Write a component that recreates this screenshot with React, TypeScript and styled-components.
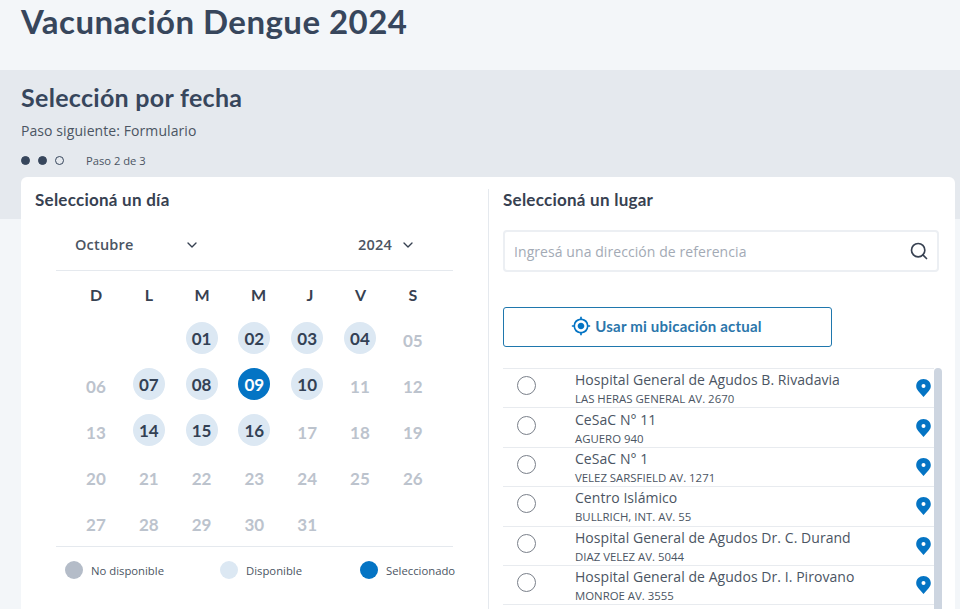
import React from "react";
import styled, { createGlobalStyle } from "styled-components";
import { ChevronDown, Search } from "lucide-react";
import { MdMyLocation } from "react-icons/md";

const Global = createGlobalStyle`
  html, body { margin: 0; padding: 0; background: #f3f6f9; }
  * { box-sizing: border-box; }
  body { font-family: "Open Sans", "Liberation Sans", sans-serif; }
`;

const heading = `"Lato", "Open Sans", sans-serif`;

const Page = styled.div`
  width: 960px;
  height: 609px;
  overflow: hidden;
  background: #f3f6f9;
`;
const TopBar = styled.header`
  height: 70px;
  padding: 0 21px;
`;
const Title = styled.h1`
  margin: 0;
  font-family: ${heading};
  font-size: 33px;
  line-height: 43px;
  font-weight: 700;
  letter-spacing: 0.46px;
  color: #37465c;
`;
const Band = styled.section`
  height: 149px;
  padding: 12px 21px 0;
  background: #e5e9ee;
`;
const Subtitle = styled.h2`
  margin: 0;
  font-family: ${heading};
  font-size: 25px;
  line-height: 31px;
  font-weight: 700;
  letter-spacing: 0.3px;
  color: #37465c;
`;
const NextStep = styled.p`
  margin: 8px 0 0;
  font-size: 14px;
  line-height: 20px;
  letter-spacing: 0.08px;
  color: #4b5563;
`;
const Stepper = styled.div`
  display: flex;
  align-items: center;
  margin-top: 9px;
  height: 20px;
`;
const Dot = styled.span<{ $on?: boolean }>`
  width: 9px;
  height: 9px;
  margin-right: 8px;
  border-radius: 50%;
  background: ${(p) => (p.$on ? "#37465c" : "transparent")};
  border: 1px solid #37465c;
`;
const StepLabel = styled.span`
  margin-left: 14px;
  font-size: 11.2px;
  color: #4b5563;
`;
const Card = styled.main`
  display: grid;
  grid-template-columns: 467px 467px;
  width: 934px;
  height: 500px;
  margin: -42px 0 0 21px;
  background: #fff;
  border-radius: 6px 6px 0 0;
`;
const LeftCol = styled.div`
  padding: 12px 0 0 14px;
`;
const RightCol = styled.div`
  margin-top: 12px;
  padding: 0 0 0 14px;
  border-left: 1px solid #e5e9ee;
`;
const ColTitle = styled.h3`
  margin: 0;
  font-family: ${heading};
  font-size: 17px;
  line-height: 21px;
  font-weight: 700;
  letter-spacing: 0.25px;
  color: #374151;
`;
const Calendar = styled.div`
  width: 397px;
  margin: 13px 0 0 21px;
`;
const Selects = styled.div`
  display: flex;
  align-items: center;
  justify-content: space-between;
  height: 48px;
  padding: 0 37px 4px 19px;
  border-bottom: 1px solid #e5e9ee;
`;
const Select = styled.div<{ $w: number }>`
  display: flex;
  align-items: center;
  justify-content: space-between;
  width: ${(p) => p.$w}px;
  font-size: 14.5px;
  font-weight: 600;
  letter-spacing: 0.2px;
  color: #4b5563;
  svg { color: #374151; }
`;
const Week = styled.div`
  display: grid;
  grid-template-columns: 52.8px 53.2px 52.8px 60.2px 42.8px 58.2px 46.8px;
  padding: 0 13.6px;
`;
const WeekDay = styled.div`
  height: 44px;
  padding-top: 2px;
  display: flex;
  align-items: center;
  justify-content: center;
  font-family: ${heading};
  font-size: 16px;
  font-weight: 700;
  color: #374151;
`;
const Days = styled.div`
  display: grid;
  grid-template-columns: repeat(7, 52.8px);
  grid-auto-rows: 46px;
  padding: 0 13.6px;
`;
const Day = styled.div<{ $kind: "off" | "on" | "sel" | "none" }>`
  justify-self: center;
  align-self: center;
  width: 32px;
  height: 32px;
  display: flex;
  align-items: center;
  justify-content: center;
  border-radius: 50%;
  font-family: ${heading};
  font-size: 17px;
  font-weight: 700;
  padding-top: ${(p) => (p.$kind === "off" ? 4 : 0)}px;
  background: ${(p) =>
    p.$kind === "on" ? "#dce8f3" : p.$kind === "sel" ? "#0474c4" : "transparent"};
  color: ${(p) =>
    p.$kind === "on" ? "#334155" : p.$kind === "sel" ? "#fff" : "#bcc3cd"};
`;
const Legend = styled.div`
  display: flex;
  align-items: center;
  height: 47px;
  margin-top: 1px;
  padding-left: 9px;
  border-top: 1px solid #e5e9ee;
  width: 397px;
`;
const LegendItem = styled.div<{ $w: number }>`
  display: flex;
  align-items: center;
  gap: 8px;
  flex: none;
  width: ${(p) => p.$w}px;
  font-size: 11.3px;
  color: #4b5563;
  white-space: nowrap;
`;
const Swatch = styled.span<{ $c: string }>`
  flex: none;
  width: 18px;
  height: 18px;
  border-radius: 50%;
  background: ${(p) => p.$c};
`;
const SearchBox = styled.div`
  display: flex;
  align-items: center;
  justify-content: space-between;
  width: 436px;
  height: 42px;
  margin-top: 20px;
  padding: 0 8px 0 9px;
  border: 2px solid #eceff3;
  border-radius: 4px;
  font-size: 14px;
  letter-spacing: 0.07px;
  color: #a3aab5;
  svg { color: #374151; }
`;
const LocateButton = styled.button`
  display: flex;
  align-items: center;
  justify-content: center;
  gap: 4px;
  width: 329px;
  height: 40px;
  margin-top: 35px;
  padding: 0 2px 2px 0;
  background: #fff;
  border: 1px solid #1f77ad;
  border-radius: 3px;
  font-family: ${heading};
  font-size: 15px;
  font-weight: 700;
  letter-spacing: 0.2px;
  color: #2b76ab;
  svg { color: #0474c4; }
`;
const ListWrap = styled.div`
  display: flex;
  width: 439px;
  margin-top: 21px;
`;
const List = styled.ul`
  list-style: none;
  margin: 0;
  padding: 0;
  flex: 0 0 431px;
`;
const Row = styled.li`
  display: grid;
  grid-template-columns: 72px 1fr 18px;
  align-items: center;
  height: 39.4px;
  border-top: 1px solid #e8ebef;
`;
const Radio = styled.span`
  justify-self: start;
  width: 19px;
  height: 19px;
  margin: -5px 0 0 14px;
  border-radius: 50%;
  border: 1px solid #7a808a;
  background: #fff;
`;
const RowText = styled.div`
  display: flex;
  flex-direction: column;
  gap: 1px;
`;
const Name = styled.span`
  font-size: 14px;
  line-height: 20px;
  letter-spacing: 0.05px;
  color: #4b5563;
`;
const Addr = styled.span`
  font-size: 11.4px;
  line-height: 15px;
  color: #4b5563;
`;
const PinWrap = styled.span`
  display: flex;
`;
const ScrollBar = styled.div`
  flex: 0 0 8px;
  height: 260px;
  background: #cdd5e0;
  border-radius: 4px 4px 0 0;
`;

const Pin = () => (
  <PinWrap>
    <svg width="15" height="18" viewBox="0 0 15 18">
      <path
        d="M7.5 0C3.4 0 .2 3.1.2 7.1c0 2 .8 3.6 2 4.9L7.5 18l5.3-6c1.2-1.3 2-2.9 2-4.9C14.8 3.1 11.6 0 7.5 0z"
        fill="#0474c4"
      />
      <circle cx="7.5" cy="7" r="2" fill="#fff" />
    </svg>
  </PinWrap>
);

const weekdays = ["D", "L", "M", "M", "J", "V", "S"];
const available = ["01", "02", "03", "04", "07", "08", "10", "14", "15", "16"];
const cells = [
  "", "", "01", "02", "03", "04", "05",
  "06", "07", "08", "09", "10", "11", "12",
  "13", "14", "15", "16", "17", "18", "19",
  "20", "21", "22", "23", "24", "25", "26",
  "27", "28", "29", "30", "31",
];
const places = [
  ["Hospital General de Agudos B. Rivadavia", "LAS HERAS GENERAL AV. 2670"],
  ["CeSaC N° 11", "AGUERO 940"],
  ["CeSaC N° 1", "VELEZ SARSFIELD AV. 1271"],
  ["Centro Islámico", "BULLRICH, INT. AV. 55"],
  ["Hospital General de Agudos Dr. C. Durand", "DIAZ VELEZ AV. 5044"],
  ["Hospital General de Agudos Dr. I. Pirovano", "MONROE AV. 3555"],
];

const kindOf = (c: string) =>
  !c ? "none" : c === "09" ? "sel" : available.includes(c) ? "on" : "off";

export default function App() {
  return (
    <Page>
      <Global />
      <TopBar>
        <Title>Vacunación Dengue 2024</Title>
      </TopBar>
      <Band>
        <Subtitle>Selección por fecha</Subtitle>
        <NextStep>Paso siguiente: Formulario</NextStep>
        <Stepper>
          <Dot $on />
          <Dot $on />
          <Dot />
          <StepLabel>Paso 2 de 3</StepLabel>
        </Stepper>
      </Band>
      <Card>
        <LeftCol>
          <ColTitle>Seleccioná un día</ColTitle>
          <Calendar>
            <Selects>
              <Select $w={125}>
                Octubre <ChevronDown size={16} />
              </Select>
              <Select $w={58}>
                2024 <ChevronDown size={16} />
              </Select>
            </Selects>
            <Week>
              {weekdays.map((d, i) => (
                <WeekDay key={i}>{d}</WeekDay>
              ))}
            </Week>
            <Days>
              {cells.map((c, i) => (
                <Day key={i} $kind={kindOf(c)}>
                  {c}
                </Day>
              ))}
            </Days>
            <Legend>
              <LegendItem $w={155}>
                <Swatch $c="#b4bcc8" />
                No disponible
              </LegendItem>
              <LegendItem $w={140}>
                <Swatch $c="#dce8f3" />
                Disponible
              </LegendItem>
              <LegendItem $w={93}>
                <Swatch $c="#0474c4" />
                Seleccionado
              </LegendItem>
            </Legend>
          </Calendar>
        </LeftCol>
        <RightCol>
          <ColTitle>Seleccioná un lugar</ColTitle>
          <SearchBox>
            Ingresá una dirección de referencia
            <Search size={20} />
          </SearchBox>
          <LocateButton>
            <MdMyLocation size={20} />
            Usar mi ubicación actual
          </LocateButton>
          <ListWrap>
            <List>
              {places.map(([n, a]) => (
                <Row key={n}>
                  <Radio />
                  <RowText>
                    <Name>{n}</Name>
                    <Addr>{a}</Addr>
                  </RowText>
                  <Pin />
                </Row>
              ))}
              <Row />
            </List>
            <ScrollBar />
          </ListWrap>
        </RightCol>
      </Card>
    </Page>
  );
}
